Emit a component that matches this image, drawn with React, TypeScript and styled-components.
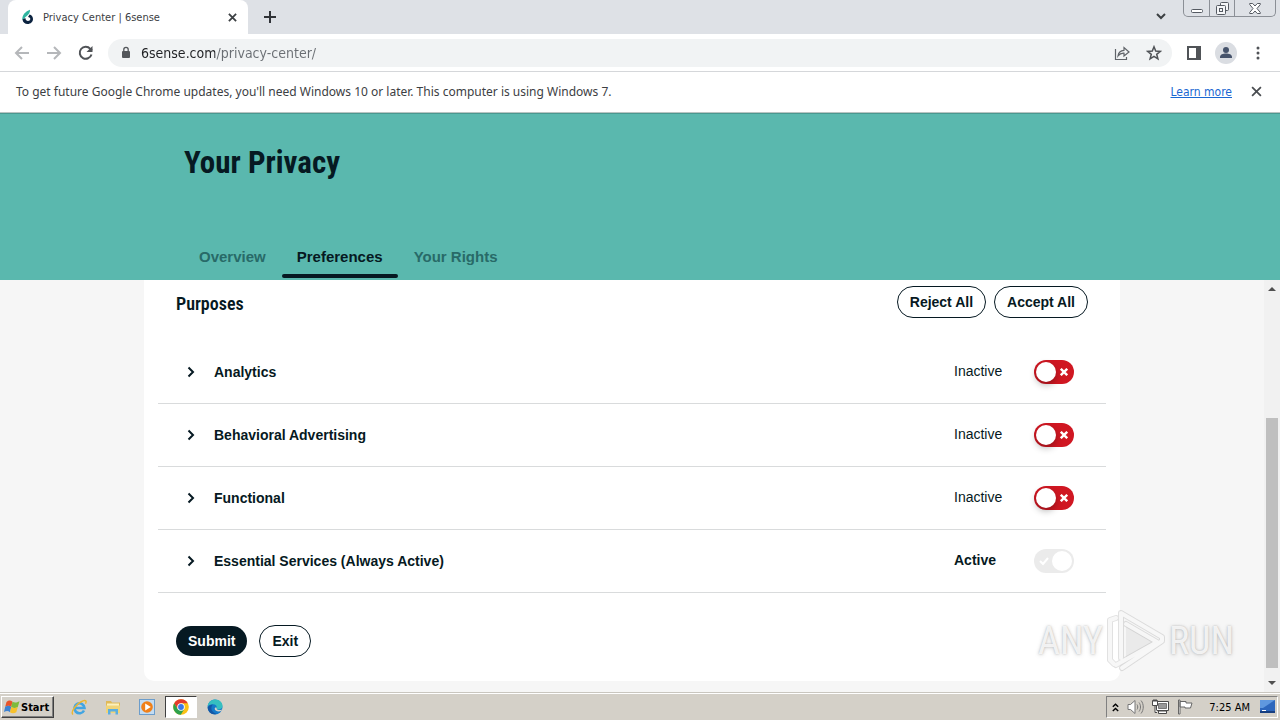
import React from 'react';
import styled, { createGlobalStyle } from 'styled-components';

const uiFont = '"DejaVu Sans Condensed", "Noto Sans", sans-serif';
const noticeFont = '"Noto Sans", "DejaVu Sans Condensed", sans-serif';
const bodyFont = '"Liberation Sans", Arial, sans-serif';
const narrowFont = '"Roboto Condensed", Roboto, "Liberation Sans", sans-serif';
const ink = '#061922';

const GlobalStyle = createGlobalStyle`
  * { box-sizing: border-box; }
  body { margin: 0; font-family: ${bodyFont}; color: ${ink}; }
  button { font-family: inherit; color: inherit; cursor: pointer; margin: 0; }
  svg { display: block; flex: none; }
`;

const Screen = styled.div`
  display: flex;
  flex-direction: column;
  min-height: 100vh;
  position: relative;
  background: #f6f6f6;
`;

/* Browser frame */

const TabStrip = styled.div`
  display: flex;
  align-items: flex-start;
  height: 34px;
  padding-left: 8px;
  background: #dee1e6;
  font-family: ${uiFont};
`;

const BrowserTab = styled.div`
  display: flex;
  align-items: center;
  gap: 8px;
  width: 240px;
  height: 34px;
  padding: 0 8px 0 12px;
  border-radius: 8px 8px 0 0;
  background: #fff;
  font-size: 11px;
  color: #3c4043;
`;

const TabTitle = styled.span`
  flex: 1;
  white-space: nowrap;
`;

const IconButton = styled.button<{ $size?: number }>`
  display: flex;
  align-items: center;
  justify-content: center;
  width: ${p => p.$size ?? 32}px;
  height: ${p => p.$size ?? 32}px;
  padding: 0;
  border: 0;
  border-radius: 50%;
  background: none;
  flex: none;
`;

const NewTab = styled(IconButton)`
  margin: 1px 0 0 6px;
`;

const Spacer = styled.div`
  flex: 1;
`;

const WindowControls = styled.div`
  display: flex;
  height: 17px;
  margin: 0 4px 0 6px;
  border: 1px solid #8b8f96;
  border-top: 0;
  border-radius: 0 0 5px 5px;
`;

const WindowButton = styled.button<{ $wide?: boolean }>`
  display: flex;
  align-items: center;
  justify-content: center;
  width: ${p => (p.$wide ? 41 : 25)}px;
  padding: 0;
  border: 0;
  border-left: 1px solid #8b8f96;
  background: none;
  &:first-child { border-left: 0; }
`;

const Toolbar = styled.div`
  display: flex;
  align-items: center;
  height: 38px;
  padding: 0 6px;
  background: #fff;
  border-bottom: 1px solid #d5d7da;
`;

const AddressBar = styled.label`
  display: flex;
  align-items: center;
  flex: 1;
  height: 28px;
  margin: 0 6px;
  padding: 0 2px 0 12px;
  border-radius: 14px;
  background: #f1f3f4;
`;

const AddressInput = styled.input`
  flex: 1;
  min-width: 0;
  margin-left: 9px;
  padding: 0;
  border: 0;
  outline: 0;
  font-family: ${uiFont};
  font-size: 14px;
  line-height: 20px;
  color: transparent;
  background: linear-gradient(90deg, #202124 74px, #6a6e73 74px);
  background-clip: text;
`;

const Avatar = styled.span`
  display: flex;
  align-items: flex-end;
  justify-content: center;
  width: 22px;
  height: 22px;
  border-radius: 50%;
  background: #dadde2;
`;

const InfoBar = styled.div`
  display: flex;
  align-items: center;
  height: 41px;
  padding: 0 8px 1px 16px;
  background: #fff;
  border-bottom: 1px solid #b9c4c2;
  font-family: ${noticeFont};
  font-size: 12px;
  color: #3c4043;
`;

const InfoLink = styled.a`
  margin-right: 8px;
  font-family: ${uiFont};
  color: #1967d2;
`;

/* Privacy page */

const Hero = styled.header`
  background: #5ab8ae;
  border-top: 1px solid #4a9890;
`;

const HeroInner = styled.div`
  max-width: 976px;
  margin: 0 auto;
  padding: 29px 32px 2px;
`;

const Title = styled.h1`
  margin: 0 0 57px;
  font-family: ${narrowFont};
  font-size: 31px;
  line-height: 40px;
  font-weight: 700;
`;

const Tabs = styled.nav`
  display: flex;
  gap: 1px;
`;

const TabLink = styled.a<{ $active?: boolean }>`
  padding: 8px 15px 0;
  font-size: 15px;
  line-height: 18px;
  font-weight: 700;
  text-decoration: none;
  color: ${p => (p.$active ? ink : '#286a68')};
  &::after {
    content: '';
    display: block;
    height: 4px;
    margin: 8px -15px 0;
    border-radius: 2px;
    background: ${p => (p.$active ? ink : 'transparent')};
  }
`;

const Viewport = styled.div`
  display: flex;
  flex: 1;
`;

const Page = styled.main`
  flex: 1;
  padding-bottom: 11px;
`;

const Card = styled.section`
  max-width: 976px;
  margin: 0 auto;
  padding: 6px 14px 24px;
  background: #fff;
  border-radius: 0 0 10px 10px;
`;

const CardHead = styled.div`
  display: flex;
  align-items: center;
  gap: 8px;
  padding: 0 18px;
  margin-bottom: 23px;
`;

const Heading = styled.h2`
  flex: 1;
  margin: 0;
  padding-top: 4px;
  font-family: ${narrowFont};
  font-size: 18px;
  line-height: 24px;
  font-weight: 600;
`;

const Pill = styled.button<{ $solid?: boolean }>`
  height: ${p => (p.$solid ? 30 : 32)}px;
  padding: 0 12px;
  border: ${p => (p.$solid ? '0' : `1px solid ${ink}`)};
  border-radius: 16px;
  background: ${p => (p.$solid ? ink : '#fff')};
  color: ${p => (p.$solid ? '#fff' : ink)};
  font-size: 14px;
  line-height: 20px;
  font-weight: 700;
`;

const PurposeList = styled.ul`
  margin: 0;
  padding: 0;
  list-style: none;
`;

const PurposeRow = styled.li`
  display: flex;
  align-items: center;
  height: 63px;
  padding: 0 32px 0 23px;
  border-bottom: 1px solid #d9dbdc;
`;

const PurposeButton = styled.button`
  display: flex;
  align-items: center;
  gap: 13px;
  padding: 0;
  border: 0;
  background: none;
  font-size: 14px;
  line-height: 20px;
  font-weight: 700;
`;

const SwitchLabel = styled.label`
  display: flex;
  align-items: center;
  margin-left: auto;
`;

const Status = styled.span<{ $bold?: boolean }>`
  width: 80px;
  padding-bottom: 2px;
  font-size: 14px;
  line-height: 20px;
  font-weight: ${p => (p.$bold ? 700 : 400)};
`;

const Track = styled.span<{ $on?: boolean }>`
  display: flex;
  flex-direction: ${p => (p.$on ? 'row-reverse' : 'row')};
  align-items: center;
  width: 40px;
  height: 24px;
  padding: 2px;
  border-radius: 12px;
  background: ${p => (p.$on ? '#ebebeb' : '#d01722')};
  svg { margin: 0 auto; }
`;

const Knob = styled.input`
  appearance: none;
  width: 20px;
  height: 20px;
  margin: 0;
  border-radius: 50%;
  background: #fff;
  box-shadow: 0 3px 7px rgba(0, 0, 0, 0.3);
  &:disabled { box-shadow: none; }
`;

const Actions = styled.div`
  display: flex;
  align-items: center;
  gap: 12px;
  padding: 32px 18px 0;
`;

const ScrollBar = styled.div`
  display: flex;
  flex-direction: column;
  align-items: center;
  width: 16px;
  background: #f1f1f1;
`;

const ScrollArrow = styled.button`
  display: flex;
  align-items: center;
  justify-content: center;
  width: 16px;
  height: 18px;
  padding: 0;
  border: 0;
  background: none;
`;

const ScrollRail = styled.div`
  display: flex;
  flex: 1;
  flex-direction: column;
  padding-bottom: 6px;
  &::before { content: ''; flex: 12; }
`;

const ScrollThumb = styled.div`
  flex: 25;
  width: 12px;
  background: #bfbfbf;
`;

/* Desktop task bar */

const TaskBar = styled.footer`
  display: flex;
  align-items: center;
  height: 28px;
  padding: 1px 2px 0 1px;
  border-top: 1px solid #c9c6bf;
  box-shadow: inset 0 1px #fff;
  background: #d4d0c8;
  font-family: ${uiFont};
  font-size: 11px;
  color: #000;
`;

const StartButton = styled.button`
  display: flex;
  align-items: center;
  gap: 1px;
  width: 53px;
  height: 22px;
  margin-right: 8px;
  padding: 0 2px;
  border: 1px solid;
  border-color: #fff #404040 #404040 #fff;
  box-shadow: inset -1px -1px #808080;
  background: #d4d0c8;
  font-size: 11px;
  font-weight: 700;
`;

const TaskButton = styled.button<{ $active?: boolean }>`
  display: flex;
  align-items: center;
  justify-content: center;
  width: ${p => (p.$active ? 32 : 34)}px;
  height: 22px;
  margin: 0 ${p => (p.$active ? 1 : 0)}px;
  padding: 0;
  border: 1px solid;
  border-color: ${p => (p.$active ? '#404040 #fff #fff #404040' : 'transparent')};
  background: ${p => (p.$active ? '#fff' : 'none')};
`;

const Tray = styled.div`
  display: flex;
  align-items: center;
  gap: 8px;
  height: 22px;
  margin-left: auto;
  padding: 0 2px 0 5px;
  border: 1px solid;
  border-color: #808080 #fff #fff #808080;
`;

const Clock = styled.time`
  margin: 0 2px 0 7px;
`;

/* Recorder's mark laid over the desktop */

const Watermark = styled.div`
  position: absolute;
  right: 46px;
  bottom: 46px;
  display: flex;
  align-items: center;
  gap: 3px;
  font-family: ${narrowFont};
  font-size: 38px;
  font-weight: 400;
  line-height: 64px;
  color: rgba(250, 250, 250, 0.9);
  text-shadow: 0 0 2px rgba(130, 130, 130, 0.5), 0 1px 4px rgba(130, 130, 130, 0.3);
  pointer-events: none;
`;

const Cross = ({ size, color, width = 2 }: { size: number; color: string; width?: number }) => (
  <svg width={size} height={size} viewBox="0 0 10 10" stroke={color} strokeWidth={width} aria-hidden="true">
    <path d="M1 1l8 8M9 1l-8 8" />
  </svg>
);

const SenseLogo = () => (
  <svg width="15" height="16" viewBox="0 0 15 16" aria-hidden="true">
    <path d="M10 .8C5.500 2.500 2 6 2.300 11c1.500-1 2.700-2.500 4.500-4C9 5.200 10.200 3.500 10 .8z" fill="#2fb5a0" />
    <path d="M2.500 10.500c.3 2.800 2.500 4.500 5 4.500 3.300 0 5.500-2.300 5.500-5 0-2.300-1.500-4-3.500-4.500L8 8c1.500.2 2.300 1 2.300 2S9.300 12 8 12 5.700 11.300 5.300 9z" fill="#0c2340" />
  </svg>
);

const Arrow = ({ flip }: { flip?: boolean }) => (
  <svg width="16" height="16" viewBox="0 0 16 16" fill="none" stroke="#b5b7ba" strokeWidth="2" aria-hidden="true">
    <path d={flip ? 'M1 8h13M8 2l6 6-6 6' : 'M15 8H2M8 2L2 8l6 6'} />
  </svg>
);

const Chevron = () => (
  <svg width="20" height="12" viewBox="0 0 20 12" fill="none" stroke={ink} strokeWidth="2" aria-hidden="true">
    <path d="M7.500 1.500L12 6l-4.500 4.500" />
  </svg>
);

type PurposeProps = { name: string; active?: boolean };

const Purpose = ({ name, active }: PurposeProps) => (
  <PurposeRow>
    <PurposeButton aria-expanded={false}><Chevron />{name}</PurposeButton>
    <SwitchLabel>
      <Status $bold={active}>{active ? 'Active' : 'Inactive'}</Status>
      <Track $on={active}>
        <Knob type="checkbox" role="switch" aria-label={name} defaultChecked={active} disabled={active} />
        {active ? (
          <svg width="10" height="10" viewBox="0 0 10 10" fill="none" stroke="#fff" strokeWidth="2"><path d="M1 5l3 3 5-6" /></svg>
        ) : (
          <Cross size={8} color="#fff" width={3} />
        )}
      </Track>
    </SwitchLabel>
  </PurposeRow>
);

export default function App() {
  return (
    <Screen>
      <GlobalStyle />
      <TabStrip>
        <BrowserTab>
          <SenseLogo />
          <TabTitle>Privacy Center | 6sense</TabTitle>
          <IconButton $size={16} aria-label="Close tab"><Cross size={9} color="#3c4043" /></IconButton>
        </BrowserTab>
        <NewTab aria-label="New tab">
          <svg width="12" height="12" viewBox="0 0 12 12" stroke="#303338" strokeWidth="2"><path d="M6 0v12M0 6h12" /></svg>
        </NewTab>
        <Spacer />
        <IconButton aria-label="Search tabs">
          <svg width="10" height="7" viewBox="0 0 10 7" fill="none" stroke="#3c4043" strokeWidth="2"><path d="M1 1l4 4 4-4" /></svg>
        </IconButton>
        <WindowControls>
          <WindowButton aria-label="Minimize">
            <svg width="12" height="13" viewBox="0 0 12 13"><rect x=".5" y="7.500" width="11" height="3" rx="1" fill="#fff" stroke="#555a62" /></svg>
          </WindowButton>
          <WindowButton aria-label="Restore">
            <svg width="13" height="13" viewBox="0 0 13 13" fill="#f4f5f7" stroke="#555a62"><rect x="4.500" y=".5" width="8" height="8" rx="1" /><rect x=".5" y="3.500" width="9" height="9" rx="1" /><rect x="3.500" y="6.500" width="3" height="3" /></svg>
          </WindowButton>
          <WindowButton $wide aria-label="Close">
            <svg width="12" height="11" viewBox="0 0 12 11" fill="#fff" stroke="#555a62"><path d="M.7.500h3L6 3 8.300.500h3v1L8 5.500l3.300 4v1h-3L6 8l-2.300 2.500h-3v-1L4 5.500.7 1.500z" /></svg>
          </WindowButton>
        </WindowControls>
      </TabStrip>
      <Toolbar>
        <IconButton aria-label="Back"><Arrow /></IconButton>
        <IconButton aria-label="Forward"><Arrow flip /></IconButton>
        <IconButton aria-label="Reload">
          <svg width="16" height="16" viewBox="0 0 16 16" fill="none" stroke="#505357" strokeWidth="2"><path d="M13.500 9.500A6 6 0 1 1 12.300 3.800L14 5.500" /><path d="M14.500 1v6h-6z" fill="#505357" stroke="none" /></svg>
        </IconButton>
        <AddressBar>
          <svg width="12" height="14" viewBox="0 0 12 14"><rect x="2" y="5" width="8" height="7" rx="1" fill="#54575b" /><path d="M3.800 6V3.500a2.200 2.200 0 0 1 4.400 0V6" fill="none" stroke="#54575b" strokeWidth="1.300" /></svg>
          <AddressInput aria-label="Address" defaultValue="6sense.com/privacy-center/" />
          <IconButton aria-label="Share">
            <svg width="16" height="16" viewBox="0 0 16 16" fill="none" stroke="#5f6368" strokeWidth="1.200"><path d="M1.500 4v10.500h11V12M4 11c.5-4 2.500-5.500 6-5.700V2.500L15 7l-5 4V8.200C7.500 8 5.500 9 4 11z" /></svg>
          </IconButton>
          <IconButton aria-label="Bookmark">
            <svg width="16" height="16" viewBox="0 0 16 16" fill="none" stroke="#505357" strokeWidth="1.500"><path d="M8 1.800l1.700 4.300 4.600.3-3.600 2.900 1.200 4.500L8 11.300l-3.900 2.500 1.200-4.500L1.700 6.400l4.600-.3z" /></svg>
          </IconButton>
        </AddressBar>
        <IconButton aria-label="Side panel">
          <svg width="14" height="14" viewBox="0 0 14 14"><path d="M1 1h12v12H1z" fill="none" stroke="#505357" strokeWidth="2" /><path d="M9 1h4v12H9z" fill="#505357" /></svg>
        </IconButton>
        <IconButton aria-label="Profile">
          <Avatar><svg width="22" height="22" viewBox="0 0 22 22" fill="#46536b"><circle cx="11" cy="8" r="3" /><path d="M5 16v-1c0-2.500 3-3.500 6-3.500s6 1 6 3.500v1z" /></svg></Avatar>
        </IconButton>
        <IconButton aria-label="Menu">
          <svg width="4" height="14" viewBox="0 0 4 14" fill="#505357"><circle cx="2" cy="2" r="1.500" /><circle cx="2" cy="7" r="1.500" /><circle cx="2" cy="12" r="1.500" /></svg>
        </IconButton>
      </Toolbar>
      <InfoBar>
        <span>To get future Google Chrome updates, you'll need Windows 10 or later. This computer is using Windows 7.</span>
        <Spacer />
        <InfoLink href="#learn">Learn more</InfoLink>
        <IconButton aria-label="Dismiss"><Cross size={11} color="#4a4d51" width={1.6} /></IconButton>
      </InfoBar>
      <Hero>
        <HeroInner>
          <Title>Your Privacy</Title>
          <Tabs>
            <TabLink href="#overview">Overview</TabLink>
            <TabLink href="#preferences" $active>Preferences</TabLink>
            <TabLink href="#rights">Your Rights</TabLink>
          </Tabs>
        </HeroInner>
      </Hero>
      <Viewport>
        <Page>
          <Card>
            <CardHead>
              <Heading>Purposes</Heading>
              <Pill>Reject All</Pill>
              <Pill>Accept All</Pill>
            </CardHead>
            <PurposeList>
              <Purpose name="Analytics" />
              <Purpose name="Behavioral Advertising" />
              <Purpose name="Functional" />
              <Purpose name="Essential Services (Always Active)" active />
            </PurposeList>
            <Actions>
              <Pill $solid>Submit</Pill>
              <Pill>Exit</Pill>
            </Actions>
          </Card>
        </Page>
        <ScrollBar>
          <ScrollArrow aria-label="Scroll up"><svg width="8" height="4" viewBox="0 0 8 4" fill="#505050"><path d="M0 4l4-4 4 4z" /></svg></ScrollArrow>
          <ScrollRail><ScrollThumb /></ScrollRail>
          <ScrollArrow aria-label="Scroll down"><svg width="8" height="4" viewBox="0 0 8 4" fill="#505050"><path d="M0 0l4 4 4-4z" /></svg></ScrollArrow>
        </ScrollBar>
      </Viewport>
      <TaskBar>
        <StartButton>
          <svg width="16" height="16" viewBox="0 0 16 16"><path d="M2.500 3c2.500-2 4.200-1.800 6-.2L7.200 8c-1.700-1.500-3.500-1.500-6-.2z" fill="#e8542a" /><path d="M8.500 2.800c2.200 1.200 4 1 7-.6L13.800 8c-2.300 1.300-4.500 1.300-6.600 0z" fill="#7dbb3c" /><path d="M1.200 7.800c2.500-1.300 4.300-1.300 6 .2L6 13.200c-1.700-1.500-3.700-1.500-6-.2z" fill="#3c82d2" /><path d="M7.200 8c2.100 1.300 4.300 1.300 6.600 0l-1.500 5.200c-2.300 1.300-4.300 1.300-6.300 0z" fill="#f7c12c" /></svg>
          Start
        </StartButton>
        <TaskButton aria-label="Internet Explorer">
          <svg width="17" height="17" viewBox="0 0 17 17" fill="none"><path d="M13 11.500A5 5 0 1 1 13.500 9H4.500" stroke="#42a5e2" strokeWidth="2.600" /><path d="M2 15.500C-1 13 6 4 12 1.800c3-1 3.800.5 2.500 3" stroke="#edb62e" strokeWidth="1.400" /></svg>
        </TaskButton>
        <TaskButton aria-label="File Explorer">
          <svg width="16" height="16" viewBox="0 0 16 16"><path d="M1 2h5l1 1.500h8V14H1z" fill="#e0b958" /><path d="M2 4.500h12v3H2z" fill="#fbf0bd" /><path d="M1 6.500h14V14H1z" fill="#f0d478" /><path d="M3 15.500V10h10v5.500h-2.500v-3h-5v3z" fill="#5aaee0" /></svg>
        </TaskButton>
        <TaskButton aria-label="Media Player">
          <svg width="16" height="16" viewBox="0 0 16 16"><rect x=".5" y=".5" width="15" height="15" fill="#c3dcf2" stroke="#6c9dcb" /><circle cx="8" cy="8" r="5.800" fill="#f08019" /><path d="M6.200 4.500L11.800 8l-5.600 3.500z" fill="#fff" /></svg>
        </TaskButton>
        <TaskButton $active aria-label="Chrome">
          <svg width="16" height="16" viewBox="0 0 16 16"><circle cx="8" cy="8" r="7.800" fill="#fbc116" /><path d="M1.200 4.200A7.800 7.800 0 0 1 14.800 4.200H8L4.700 9.900z" fill="#e33b2e" /><path d="M1.200 4.200A7.800 7.800 0 0 0 7.800 15.800L11.300 9.900H4.700z" fill="#2da14c" /><circle cx="8" cy="8" r="3.800" fill="#fff" /><circle cx="8" cy="8" r="2.900" fill="#3b78e7" /></svg>
        </TaskButton>
        <TaskButton aria-label="Edge">
          <svg width="16" height="16" viewBox="0 0 16 16"><circle cx="8" cy="8" r="7.500" fill="#1479c9" /><path d="M.6 7.200C1.500 2.500 4.800.5 8.200.5c4.200 0 7.300 3 7.300 6.200 0 2.500-2 3.800-4 3.800-1.800 0-2.500-.8-1.800-1.600C10 6.500 8.500 5.200 6 5.200c-2.300 0-4.400.8-5.400 2z" fill="#35bfc0" /><path d="M6 5.400c-3 2.600-2 8.600 4 9.400-5.500 2-9-2-9.300-6.200C1.500 6.500 4 5.400 6 5.400z" fill="#1457a5" /><path d="M9.700 9c-.6 2 2.500 2.700 5.300 1.500l-.5 1.300c-3 1.400-6.500.2-6.800-1.800-.1-1.300 1-2 2-1z" fill="#d4d0c8" /></svg>
        </TaskButton>
        <Tray>
          <svg width="7" height="9" viewBox="0 0 7 9" fill="none" stroke="#000" strokeWidth="1.400"><path d="M.8 3.800l2.700-2.600 2.700 2.600M.8 8l2.700-2.600L6.200 8" /></svg>
          <svg width="17" height="16" viewBox="0 0 17 16" fill="none" stroke="#777"><path d="M1 5.500h2.500L8 1.500v13l-4.500-4H1z" fill="#fff" /><path d="M10 5.500c1 1.500 1 3.500 0 5M12 3.500c2 2.500 2 6.500 0 9M14 1.500c3 3.500 3 9.500 0 13" /></svg>
          <svg width="17" height="16" viewBox="0 0 17 16" stroke="#4a4a4a"><path d="M4.500 2.500h12v9h-12z" fill="#fff" /><path d="M6.500 4.500h8v5h-8z" fill="#999" stroke="#777" /><path d="M6.500 12v2.500h8V12z" fill="#fff" /><path d="M.5 1.500h5v5h-5zM3 7v6.500h2M2 0v3M4 0v3" fill="#fff" /></svg>
          <svg width="17" height="16" viewBox="0 0 17 16" fill="#fff" stroke="#666"><path d="M1.500 1v14h1.500V1zM3 2.500h6v1.500h6l-1.500 5H8V8H3z" /></svg>
          <Clock>7:25 AM</Clock>
          <svg width="15" height="14" viewBox="0 0 15 14"><rect width="15" height="11" fill="#2d67bd" /><path d="M0 0h15L3 8H0z" fill="#5f98df" /><path d="M0 11h15v2H0z" fill="#173f81" /><path d="M2 10h4v1H2z" fill="#fff" /></svg>
        </Tray>
      </TaskBar>
      <Watermark aria-hidden="true">
        <span>ANY</span>
        <svg width="60" height="66" viewBox="0 0 60 66" fill="none" strokeLinejoin="round" strokeLinecap="round">
          <path d="M20 16l32 18-32 18z" fill="#aaa" fillOpacity=".15" />
          <g stroke="#aaa" strokeOpacity=".35" strokeWidth="6"><path d="M10 10L4 12v40l4 4M15 50V5l41 24v4L16 60M20 16l31 18L10 57" /></g>
          <g stroke="#fafafa" strokeOpacity=".9" strokeWidth="4"><path d="M10 10L4 12v40l4 4M15 50V5l41 24v4L16 60M20 16l31 18L10 57" /></g>
        </svg>
        <span>RUN</span>
      </Watermark>
    </Screen>
  );
}
